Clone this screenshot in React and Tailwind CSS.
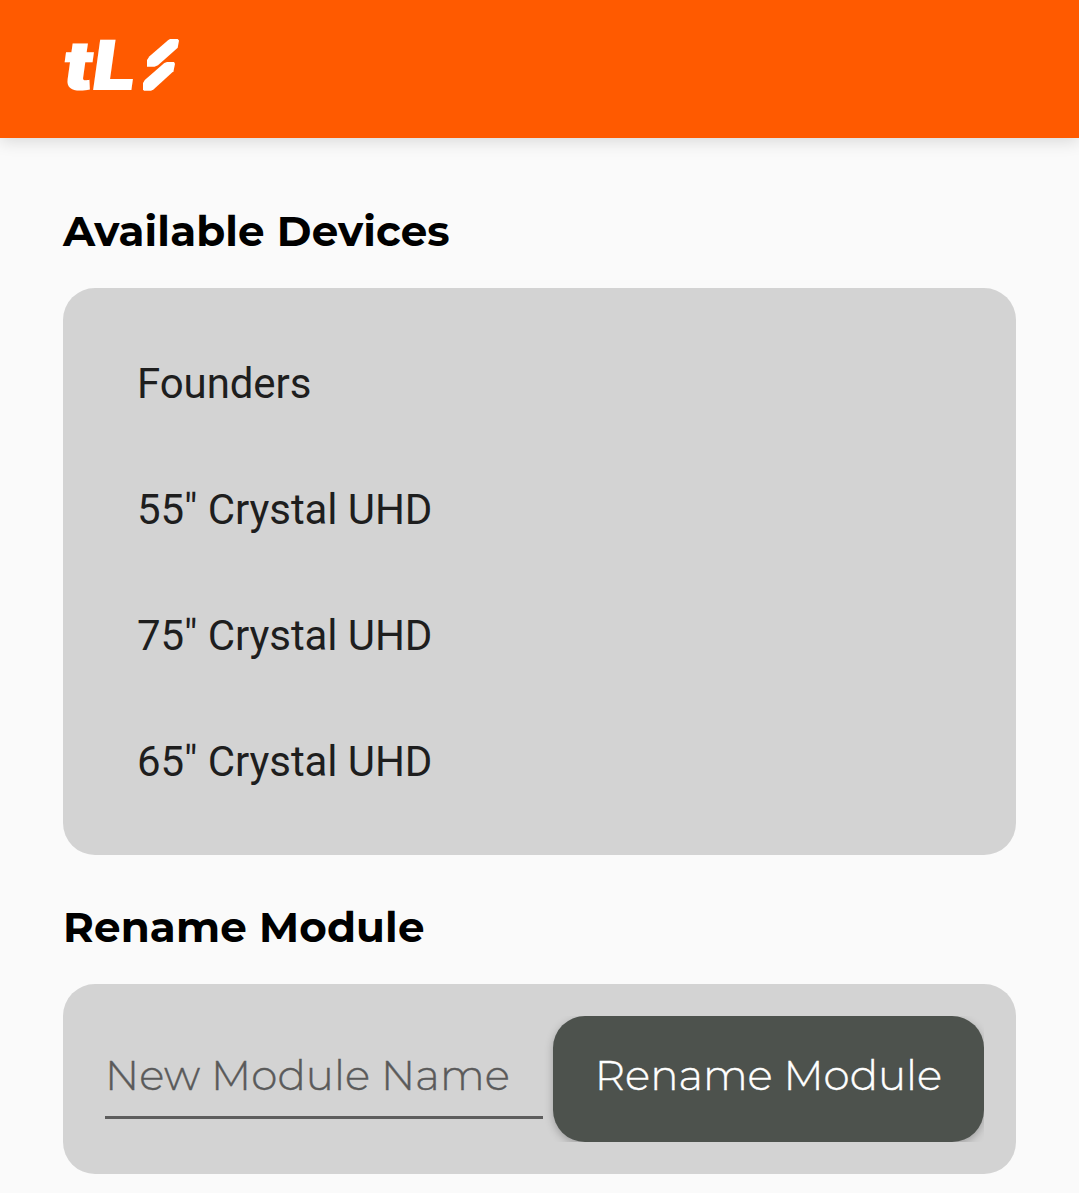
const devices = ['Founders', '55" Crystal UHD', '75" Crystal UHD', '65" Crystal UHD'];

function Logo() {
  return (
    <svg className="block h-[100px] w-[160px] overflow-visible" viewBox="42 15 160 100" fill="white" role="img" aria-label="tLS">
      <g className="font-['Inter',sans-serif] font-black" fontSize="69">
        <text transform="translate(60 90) skewX(-8)" textLength="31" lengthAdjust="spacingAndGlyphs">t</text>
        <text transform="translate(89.5 90) skewX(-8)" textLength="44" lengthAdjust="spacingAndGlyphs">L</text>
      </g>
      <path d="M147 66.7V60L149.5 56.3 168 40.2 170 39H177.7L179 40.5 177.7 47.8 158 65.2 154.5 66.7Z" />
      <path d="M143 89.5V83L144.8 80 164.3 63 167 62H174L175 63.7 173.5 71.2 153.5 89.5 151 90.7H144Z" />
    </svg>
  );
}

function SectionTitle({ children }) {
  return (
    <h2 className="whitespace-nowrap font-['Montserrat','Inter',sans-serif] text-[42px] leading-[52px] font-bold tracking-[0.15px] text-black">
      {children}
    </h2>
  );
}

export default function App() {
  return (
    <div className="h-[1193px] overflow-hidden bg-[#fafafa]">
      <header className="flex h-[137.5px] items-start bg-[#ff5a00] pt-[15px] pl-[42px] shadow-[0_3px_16px_rgba(0,0,0,0.14)]">
        <Logo />
      </header>
      <main className="px-[63px] pt-[67.5px]">
        <SectionTitle>Available Devices</SectionTitle>
        <ul className="mt-[30.5px] h-[567.5px] rounded-[32px] bg-[#d3d3d3] pt-[33px] pl-[74px]">
          {devices.map((name) => (
            <li key={name} className="flex h-[126px] items-center font-['Roboto',sans-serif] text-[42px] tracking-[-0.08px] text-[#1e1e1e]">
              {name}
            </li>
          ))}
        </ul>
        <div className="mt-[46px]">
          <SectionTitle>Rename Module</SectionTitle>
        </div>
        <section className="mt-[31px] flex h-[190px] rounded-[32px] bg-[#d3d3d3] py-[32px] pr-[32px] pl-[42px]">
          <div className="mr-[10px] h-[102.5px] w-[438px] border-b-[3px] border-[#5d5d5d] pt-[33px]">
            <span className="block whitespace-nowrap font-['Montserrat','Inter',sans-serif] text-[42px] leading-[52px] font-light tracking-[0.07px] text-[#5a5a5a] [-webkit-text-stroke:0.4px_#5a5a5a]">
              New Module Name
            </span>
          </div>
          <div className="-ml-[10px] h-[126px] flex-1 overflow-hidden pl-[10px]">
            <button className="flex h-[126px] w-full items-center justify-center rounded-[32px] bg-[#4d524d] pb-[8px] shadow-[0_3px_8px_rgba(0,0,0,0.25)]">
              <span className="whitespace-nowrap font-['Montserrat','Inter',sans-serif] text-[42px] leading-[52px] font-light text-white [-webkit-text-stroke:0.4px_white]">
                Rename Module
              </span>
            </button>
          </div>
        </section>
      </main>
    </div>
  );
}
